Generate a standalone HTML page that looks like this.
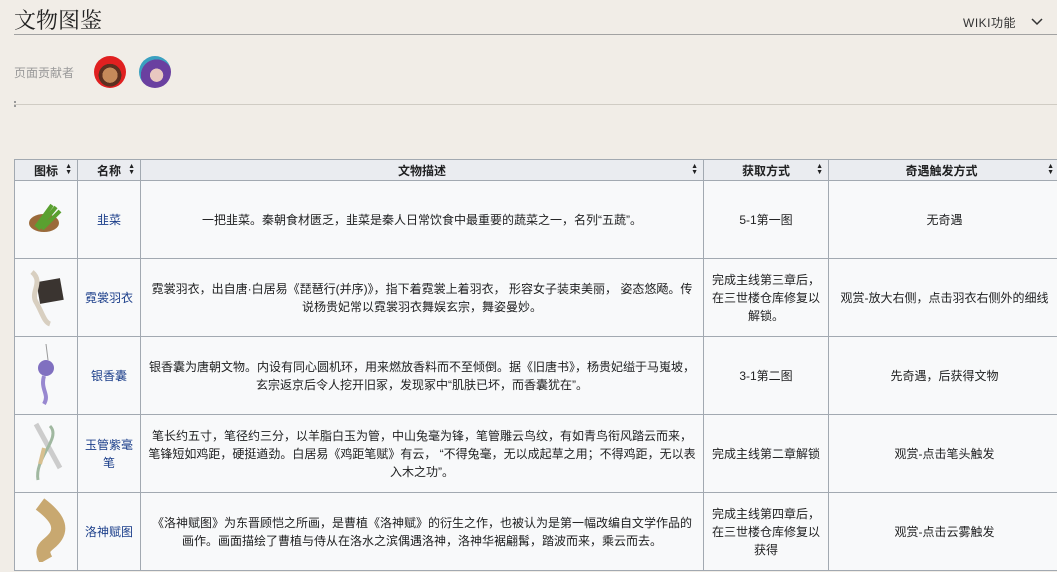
<!DOCTYPE html>
<html><head><meta charset="utf-8"><style>
*{margin:0;padding:0;box-sizing:border-box}
body{width:1057px;height:572px;overflow:hidden;background:#f1ede7;font-family:"Liberation Sans","Noto Sans CJK SC",sans-serif;color:#202122;position:relative}
.title{position:absolute;left:14px;top:4px;font-size:22px;font-family:"Liberation Serif","Noto Serif CJK SC",serif;color:#222;font-weight:normal}
.hr1{position:absolute;left:14px;right:0;top:34px;border-top:1px solid #a2a2a2}
.wiki{position:absolute;left:963px;top:14px;font-size:12px;color:#333;letter-spacing:.5px}
.chev{position:absolute;left:1030px;top:14px}
.contrib{position:absolute;left:14px;top:64px;font-size:12px;color:#999}
.av{position:absolute;top:56px;width:32px;height:32px;border-radius:50%}
.hr2{position:absolute;left:14px;right:0;top:104px;border-top:1px solid #d0ccc4}
.dot{position:absolute;left:14px;top:101px;width:2px;height:6px;border-left:2px dotted #999}
table{position:absolute;left:14px;top:159px;border-collapse:collapse;font-size:12px;width:1050px;table-layout:fixed}
th,td{border:1px solid #a2a9b1;text-align:center;vertical-align:middle}
th{background:#eaecf0;height:21px;font-weight:bold;font-size:12px;position:relative}
th .s{position:absolute;right:5px;top:4px;font-size:7px;line-height:6px}
td{background:#f8f9fa;height:78px;padding:0 6px;line-height:18px}
td.n{color:#1b3e8a}
</style></head><body>
<div class="title">文物图鉴</div>
<div class="hr1"></div>
<div class="wiki">WIKI功能</div>
<svg class="chev" width="14" height="14" viewBox="0 0 14 14"><path d="M2 5l5 5 5-5" fill="none" stroke="#333" stroke-width="1.5"/></svg>
<div class="contrib">页面贡献者</div>
<div class="av" style="left:94px;background:radial-gradient(circle at 50% 60%,#c58a5a 0 30%,#5a3020 31% 45%,#e02020 46%)"></div>
<div class="av" style="left:139px;background:radial-gradient(circle at 55% 60%,#e8c8c0 0 25%,#6a40a0 26% 60%,#3aa0c0 61%)"></div>
<div class="dot"></div><div class="hr2"></div>
<table>
<colgroup><col style="width:63px"><col style="width:63px"><col style="width:563px"><col style="width:125px"><col style="width:236px"></colgroup>
<tr><th>图标<span class="s">▲<br>▼</span></th><th>名称<span class="s">▲<br>▼</span></th><th>文物描述<span class="s">▲<br>▼</span></th><th>获取方式<span class="s">▲<br>▼</span></th><th style="padding-right:10px">奇遇触发方式<span class="s" style="right:10px">▲<br>▼</span></th></tr>
<tr><td><svg width="40" height="36"><ellipse cx="18" cy="24" rx="15" ry="9" fill="#9a6a3a"/><path d="M12 30L30 8M16 30L34 12M10 28L26 6" stroke="#5aa030" stroke-width="4"/></svg></td><td class="n">韭菜</td><td>一把韭菜。秦朝食材匮乏，韭菜是秦人日常饮食中最重要的蔬菜之一，名列“五蔬”。</td><td>5-1第一图</td><td style="padding-right:10px">无奇遇</td></tr>
<tr><td><svg width="44" height="66"><rect x="14" y="18" width="24" height="22" fill="#3a3430" transform="rotate(-10 26 29)"/><path d="M8 10C20 20 6 30 12 40S20 60 26 62" stroke="#d8cfc0" stroke-width="5" fill="none"/></svg></td><td class="n">霓裳羽衣</td><td>霓裳羽衣，出自唐·白居易《琵琶行(并序)》，指下着霓裳上着羽衣，&nbsp;形容女子装束美丽，&nbsp;姿态悠飏。传说杨贵妃常以霓裳羽衣舞娱玄宗，舞姿曼妙。</td><td>完成主线第三章后，在三世楼仓库修复以解锁。</td><td style="padding-right:10px">观赏-放大右侧，点击羽衣右侧外的细线</td></tr>
<tr><td><svg width="40" height="66"><path d="M20 4L22 20" stroke="#999"/><circle cx="20" cy="28" r="8" fill="#8070c0"/><path d="M18 36C14 50 24 54 18 64" stroke="#9888d0" stroke-width="4" fill="none"/></svg></td><td class="n">银香囊</td><td>银香囊为唐朝文物。内设有同心圆机环，用来燃放香料而不至倾倒。据《旧唐书》，杨贵妃缢于马嵬坡，玄宗返京后令人挖开旧冢，发现冢中“肌肤已坏，而香囊犹在”。</td><td>3-1第二图</td><td style="padding-right:10px">先奇遇，后获得文物</td></tr>
<tr><td><svg width="40" height="66"><path d="M10 6L34 50" stroke="#ccc" stroke-width="5"/><path d="M24 8C36 20 8 40 12 62" stroke="#a0b8a0" stroke-width="3" fill="none"/><path d="M18 30L14 46" stroke="#d8c090" stroke-width="4"/></svg></td><td class="n">玉管紫毫笔</td><td>笔长约五寸，笔径约三分，以羊脂白玉为管，中山兔毫为锋，笔管雕云鸟纹，有如青鸟衔风踏云而来，笔锋短如鸡距，硬挺遒劲。白居易《鸡距笔赋》有云，&nbsp;“不得兔毫，无以成起草之用；不得鸡距，无以表入木之功”。</td><td>完成主线第二章解锁</td><td style="padding-right:10px">观赏-点击笔头触发</td></tr>
<tr><td><svg width="40" height="66"><path d="M14 8C30 20 36 30 30 40S12 50 20 64" stroke="#c8a870" stroke-width="14" fill="none"/></svg></td><td class="n">洛神赋图</td><td>《洛神赋图》为东晋顾恺之所画，是曹植《洛神赋》的衍生之作，也被认为是第一幅改编自文学作品的画作。画面描绘了曹植与侍从在洛水之滨偶遇洛神，洛神华裾翩髯，踏波而来，乘云而去。</td><td>完成主线第四章后，在三世楼仓库修复以获得</td><td style="padding-right:10px">观赏-点击云雾触发</td></tr>
</table>
</body></html>
